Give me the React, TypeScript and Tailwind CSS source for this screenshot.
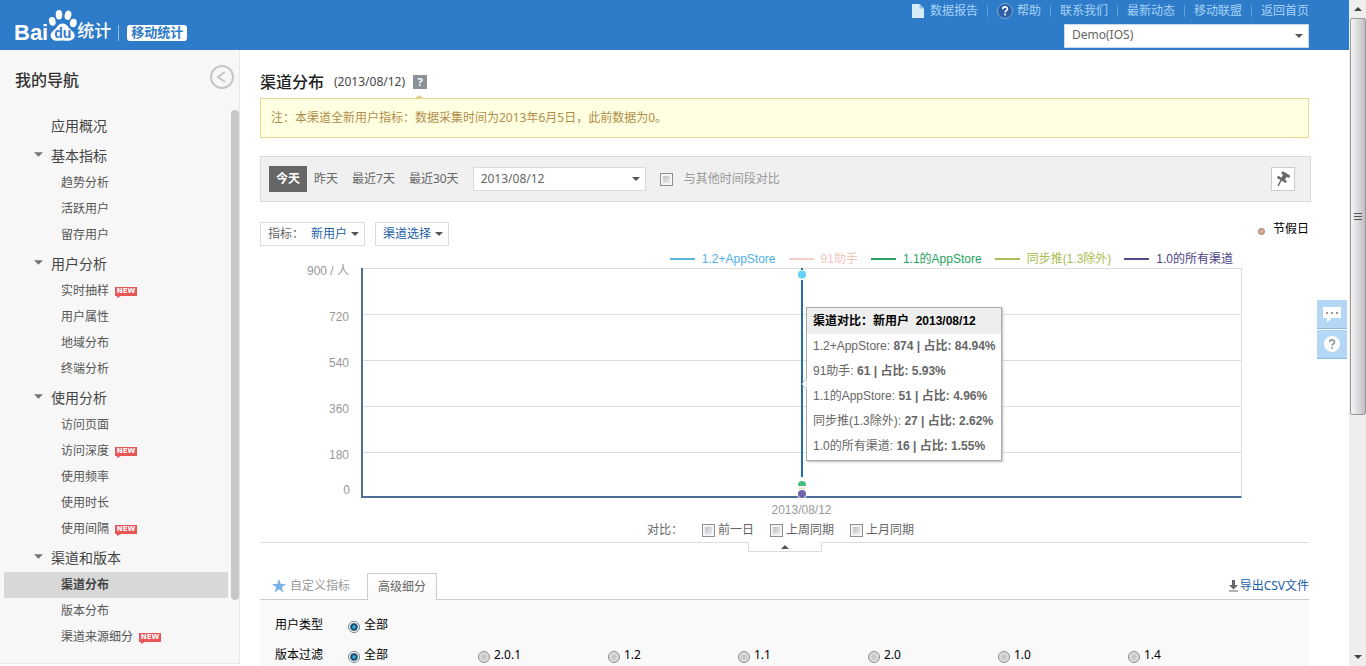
import React from "react";

type NavItem = { label: string; isNew?: boolean; active?: boolean };
type NavGroup = { title: string; items: NavItem[] };

const navGroups: NavGroup[] = [
  { title: "基本指标", items: [{ label: "趋势分析" }, { label: "活跃用户" }, { label: "留存用户" }] },
  {
    title: "用户分析",
    items: [{ label: "实时抽样", isNew: true }, { label: "用户属性" }, { label: "地域分布" }, { label: "终端分析" }],
  },
  {
    title: "使用分析",
    items: [
      { label: "访问页面" },
      { label: "访问深度", isNew: true },
      { label: "使用频率" },
      { label: "使用时长" },
      { label: "使用间隔", isNew: true },
    ],
  },
  {
    title: "渠道和版本",
    items: [{ label: "渠道分布", active: true }, { label: "版本分布" }, { label: "渠道来源细分", isNew: true }],
  },
];

const legend = [
  { name: "1.2+AppStore", line: "bg-[#5bb5e3]", text: "text-[#4fb0e6]" },
  { name: "91助手", line: "bg-[#f2cdc5]", text: "text-[#f2c6bd]" },
  { name: "1.1的AppStore", line: "bg-[#25a060]", text: "text-[#1f9f5c]" },
  { name: "同步推(1.3除外)", line: "bg-[#aebd5b]", text: "text-[#aabb50]" },
  { name: "1.0的所有渠道", line: "bg-[#534a8c]", text: "text-[#4b4285]" },
];

const shares = [
  { name: "1.2+AppStore", count: 874, share: "84.94%" },
  { name: "91助手", count: 61, share: "5.93%" },
  { name: "1.1的AppStore", count: 51, share: "4.96%" },
  { name: "同步推(1.3除外)", count: 27, share: "2.62%" },
  { name: "1.0的所有渠道", count: 16, share: "1.55%" },
];

const checkboxClass =
  "size-[13px] shrink-0 appearance-none border border-[#8e8f8f] bg-linear-to-br from-[#b4b9be] to-[#f4f4f4] shadow-[inset_0_0_0_2px_#f4f4f4] checked:bg-[#2d6fb5] checked:bg-none";
const radioClass =
  "size-3 shrink-0 appearance-none rounded-full border border-[#8a8a8a] bg-radial from-[#bdbdbd] to-[#f4f4f4] checked:border-[#6d7f8c] checked:from-[#3fb3e0] checked:from-10% checked:via-[#123a5c] checked:via-45% checked:to-[#ffffff] checked:to-62%";

function Caret({ className = "" }: { className?: string }) {
  return (
    <svg className={`h-1 w-2 shrink-0 ${className}`} viewBox="0 0 8 4" aria-hidden="true">
      <path d="M0 0h8L4 4z" fill="currentColor" />
    </svg>
  );
}

function NewBadge() {
  return (
    <span className="relative ml-1.5 flex h-[9px] w-[22px] items-center justify-center bg-[#e85658] font-['DejaVu_Sans',sans-serif] text-[7px] leading-none font-bold text-white">
      NEW
      <svg className="absolute top-full left-0.5 h-0.5 w-1" viewBox="0 0 4 2" aria-hidden="true">
        <path d="M0 0h4L0 2z" fill="#e85658" />
      </svg>
    </span>
  );
}

function Logo() {
  return (
    <a href="#home" className="flex items-end font-['Liberation_Sans','Noto_Sans_CJK_SC',sans-serif] text-white">
      <span className="text-[22px] leading-4 font-bold">Bai</span>
      <span className="relative block h-8 w-[29px]">
        <svg className="block h-8 w-[29px]" viewBox="0 0 29 32" aria-hidden="true">
          <g fill="#fff">
            <ellipse cx="4.3" cy="12.4" rx="3.3" ry="4.4" transform="rotate(-12 4.3 12.4)" />
            <ellipse cx="11" cy="5.8" rx="3.3" ry="4.8" />
            <ellipse cx="20" cy="6.2" rx="3.3" ry="4.7" transform="rotate(14 20 6.2)" />
            <ellipse cx="25.3" cy="14" rx="3.4" ry="4.2" transform="rotate(10 25.3 14)" />
            <path d="M14.5 14.6c-3.600 0-4.600 2.900-7.200 5.300-2.600 2.300-5 3.900-4.600 7 .4 3 2.900 4.900 6.700 4.900 2 0 3.200-.4 5.100-.4s3 .4 5.200.4c3.800 0 6.700-1.700 7-5 .2-3-2.300-4.600-4.700-6.900-2.600-2.400-3.500-5.300-7.500-5.300z" />
          </g>
        </svg>
        <span className="absolute inset-x-0 bottom-0.5 text-center text-sm leading-3 font-bold text-[#2e7bc9]">
          du
        </span>
      </span>
      <span className="text-[17px] leading-[18px] font-medium">统计</span>
    </a>
  );
}

function Header() {
  const links = ["联系我们", "最新动态", "移动联盟", "返回首页"];
  return (
    <header className="flex h-[50px] shrink-0 justify-between bg-[#2e7bc9] pr-10 pl-[14px]">
      <div className="flex items-end pb-[9px]">
        <Logo />
        <span className="ml-[7px] h-4 w-px bg-[#8fbde8]" />
        <span className="ml-2 h-4 rounded-[3px] bg-white px-1 text-[13px] leading-[14px] font-bold text-[#2e7bc9]">
          移动统计
        </span>
      </div>
      <div className="flex flex-col items-end">
        <nav className="flex h-[22px] items-center text-xs leading-4 text-[#a6d3f5]">
          <a href="#report" className="flex items-center gap-1.5">
            <svg className="h-3.5 w-3" viewBox="0 0 12 14" aria-hidden="true">
              <path d="M0 0h7.500L12 4.500V14H0z" fill="#d5ecf6" />
              <path d="M7.500 0v4.500H12z" fill="#8fc4e6" />
            </svg>
            数据报告
          </a>
          <span className="mx-[9px] h-3 w-px bg-[#5f9fdb]" />
          <a href="#help" className="flex items-center gap-1">
            <svg className="size-4" viewBox="0 0 16 16" aria-hidden="true">
              <circle cx="8" cy="8" r="7.500" fill="#2c5fa5" stroke="#7fa9d8" />
              <path
                d="M5.700 6.200c0-3 4.700-3 4.700-.3 0 1.600-2.300 1.700-2.300 3.500"
                fill="none"
                stroke="#fff"
                strokeWidth="1.600"
              />
              <rect x="7.200" y="10.600" width="1.800" height="1.800" fill="#fff" />
            </svg>
            帮助
          </a>
          {links.map((l) => (
            <React.Fragment key={l}>
              <span className="mx-[9px] h-3 w-px bg-[#5f9fdb]" />
              <a href="#nav">{l}</a>
            </React.Fragment>
          ))}
        </nav>
        <div className="relative mt-0.5 w-[245px]">
          <select
            aria-label="应用"
            className="block h-6 w-full appearance-none border border-[#c9dcef] bg-white pb-0.5 pl-[7px] text-xs text-[#666]"
          >
            <option>Demo(IOS)</option>
          </select>
          <Caret className="pointer-events-none absolute top-2.5 right-1.5 text-[#555]" />
        </div>
      </div>
    </header>
  );
}

function Sidebar() {
  return (
    <aside className="flex w-60 shrink-0 flex-col self-start border-r border-b border-[#e8e8e8] bg-[#f7f7f7] pb-3">
      <div className="flex h-[60px] items-center justify-between pr-[5px] pl-[15px]">
        <h2 className="text-base leading-5 font-medium text-[#333]">我的导航</h2>
        <button aria-label="收起导航" className="-mt-1.5">
          <svg className="size-6" viewBox="0 0 24 24" fill="none" stroke="#c6c6c6" strokeWidth="2" aria-hidden="true">
            <circle cx="12" cy="12" r="11" />
            <path d="M15 7l-7 5 7 5" />
          </svg>
        </button>
      </div>
      <div className="flex">
        <nav className="flex-1 pt-px pr-[3px] pl-1 text-xs text-[#555]">
          <a href="#overview" className="block pl-[47px] text-sm leading-[30px] text-[#444]">
            应用概况
          </a>
          {navGroups.map((g) => (
            <section key={g.title} className="pb-px">
              <h3 className="flex items-center gap-2 pl-[30px] text-sm leading-[29px] text-[#444]">
                <Caret className="-mt-0.5 h-[5px] w-[9px] text-[#757575]" />
                {g.title}
              </h3>
              <ul>
                {g.items.map((i) => (
                  <li key={i.label}>
                    <a
                      href="#item"
                      className={`flex h-[26px] items-center pl-[57px] leading-6 ${
                        i.active ? "bg-[#d8d8d8] font-bold text-[#444]" : ""
                      }`}
                    >
                      {i.label}
                      {i.isNew && <NewBadge />}
                    </a>
                  </li>
                ))}
              </ul>
            </section>
          ))}
        </nav>
        <div className="h-[490px] w-2 rounded-full bg-[#c8c8c8]" />
      </div>
    </aside>
  );
}

function PinIcon() {
  return (
    <svg className="h-4 w-3.5" viewBox="0 0 14 16" fill="none" stroke="currentColor" aria-hidden="true">
      <path d="M7 2l5.500 3.200" strokeWidth="3" strokeLinecap="round" />
      <path d="M9.600 3.500L7 8" strokeWidth="4.200" />
      <path d="M2.500 6.300l7 4.200" strokeWidth="2.600" strokeLinecap="round" />
      <path d="M5.200 9L2 15" strokeWidth="1.500" />
    </svg>
  );
}

function FilterBar() {
  return (
    <div className="-mr-0.5 mt-[18px] flex h-[46px] items-center border border-[#dcdcdc] bg-[#f0f0f0] pr-[15px] pl-2 text-xs text-[#666]">
      <button className="h-[26px] w-[38px] bg-[#666] font-bold text-white">今天</button>
      <button className="ml-[7px]">昨天</button>
      <button className="ml-[14px]">最近7天</button>
      <button className="ml-[14px]">最近30天</button>
      <div className="relative ml-[14px] w-[173px]">
        <select
          aria-label="日期"
          className="block h-6 w-full appearance-none border border-[#dcdcdc] bg-white pl-[7px] text-xs text-[#666]"
        >
          <option>2013/08/12</option>
        </select>
        <Caret className="pointer-events-none absolute top-2.5 right-1.5 text-[#555]" />
      </div>
      <label className="ml-[14px] flex items-center gap-[11px] text-[#999]">
        <input type="checkbox" className={checkboxClass} />
        与其他时间段对比
      </label>
      <button
        aria-label="固定"
        className="ml-auto flex size-6 items-center justify-center border border-[#ccc] bg-white text-[#666]"
      >
        <PinIcon />
      </button>
    </div>
  );
}

function Chart() {
  return (
    <div className="font-['Liberation_Sans','Noto_Sans_CJK_SC',sans-serif] text-xs">
      <div className="mt-1 flex h-[18px] items-center justify-end gap-[13px] pr-[76px] leading-4">
        {legend.map((l) => (
          <span key={l.name} className={`flex items-center gap-[7px] ${l.text}`}>
            <span className={`h-0.5 w-[25px] ${l.line}`} />
            {l.name}
          </span>
        ))}
      </div>
      <div className="flex pr-[67px]">
        <div className="flex h-[230px] w-[101px] flex-col pr-3 text-right leading-[6px] text-[#999]">
          {["900 / 人", "720", "540", "360", "180"].map((v) => (
            <span key={v} className="h-[46px] shrink-0">
              {v}
            </span>
          ))}
        </div>
        <div className="relative flex-1 border-r border-b-2 border-l-2 border-r-[#ddd] border-b-[#4d6f97] border-l-[#4d6f97]">
          <div className="absolute inset-0 flex flex-col">
            {[0, 1, 2, 3, 4].map((i) => (
              <div key={i} className="h-[46px] shrink-0 border-t border-[#ddd] last:h-11" />
            ))}
          </div>
          <span className="absolute right-full bottom-0 mr-[13px] leading-3 text-[#999]">0</span>
          <svg className="absolute top-0 left-1/2 -ml-[5px] h-[232px] w-2.5" viewBox="0 0 10 232" aria-hidden="true">
            <path d="M5 0v2M5 12v197" stroke="#1f70a8" strokeWidth="2" />
            <circle cx="5" cy="6.500" r="4" fill="#62d2f7" />
            <circle cx="5" cy="217" r="4" fill="#45bf80" />
            <path d="M0 218h10v4H0z" fill="#fff" />
            <path d="M2 220.500h6" stroke="#dfe3a8" strokeWidth="2" />
            <circle cx="5" cy="226" r="5" fill="#fff" />
            <circle cx="5" cy="226" r="4" fill="#6c65ad" />
          </svg>
          <div className="absolute top-[39px] left-1/2 ml-1 w-[196px] border border-[#aaa] bg-white text-[#666] shadow-[1px_1px_2px_#bbb]">
            <svg className="absolute top-[70px] right-full h-3 w-1.5" viewBox="0 0 6 12" aria-hidden="true">
              <path d="M6 0L1 6l5 6z" fill="#fff" stroke="#bbb" />
            </svg>
            <div className="h-[26px] bg-[#eee] px-1.5 leading-[26px] font-bold whitespace-pre text-black">
              渠道对比：新用户  2013/08/12
            </div>
            <ul className="h-[126px] px-1.5 leading-[25px] whitespace-nowrap">
              {shares.map((s) => (
                <li key={s.name}>
                  {s.name}:{" "}
                  <b>
                    {s.count} | 占比: {s.share}
                  </b>
                </li>
              ))}
            </ul>
          </div>
        </div>
      </div>
      <div className="mt-1 pr-[67px] pl-[101px] text-center leading-4 text-[#999]">2013/08/12</div>
    </div>
  );
}

function RadioRow({ name, label, options }: { name: string; label: string; options: string[] }) {
  return (
    <fieldset className="flex h-[30px] items-center pl-[15px] text-black">
      <legend className="float-left w-[73px]">{label}</legend>
      {options.map((o, i) => (
        <label key={o} className="flex w-[130px] items-center gap-1">
          <input type="radio" name={name} defaultChecked={i === 0} className={`mt-1 ${radioClass}`} />
          {o}
        </label>
      ))}
    </fieldset>
  );
}

function Main() {
  return (
    <main className="min-w-0 flex-1 pt-[22px] pr-10 pl-5 text-xs leading-4 text-[#666]">
      <div className="flex h-[26px] items-center pb-1.5">
        <h1 className="text-base leading-5 font-medium text-[#222]">渠道分布</h1>
        <span className="ml-2.5 text-[#444]">(2013/08/12)</span>
        <span className="relative ml-2 flex size-3.5 items-center justify-center bg-[#8a9197] text-[11px] font-bold text-white">
          ?
          <svg className="absolute top-5 left-px h-1 w-2.5" viewBox="0 0 10 4" aria-hidden="true">
            <path d="M5 0l5 4H0z" fill="#e3cf8c" />
          </svg>
        </span>
      </div>
      <p className="flex h-10 items-center border border-[#e5da8e] bg-[#ffffe1] px-2.5 text-[#b18d4a]">
        注：本渠道全新用户指标：数据采集时间为2013年6月5日，此前数据为0。
      </p>
      <FilterBar />
      <div className="mt-5 flex h-6 items-center gap-2.5">
        <button className="flex h-6 items-center border border-[#dcdcdc] pr-[5px] pl-[7px]">
          指标：
          <span className="ml-[7px] text-[#1a5ea8]">新用户</span>
          <Caret className="ml-1 text-[#555]" />
        </button>
        <button className="flex h-6 items-center border border-[#dcdcdc] pr-[5px] pl-[7px] text-[#1a5ea8]">
          渠道选择
          <Caret className="ml-1 text-[#555]" />
        </button>
        <span className="-mt-2.5 ml-auto flex items-center gap-2 text-black">
          <span className="mt-1 size-[7px] rounded-full border border-[#a07a74] bg-[#dba79b]" />
          节假日
        </span>
      </div>
      <Chart />
      <div className="flex h-6 items-center justify-center gap-4 pr-2">
        <span className="mr-[3px]">对比：</span>
        {["前一日", "上周同期", "上月同期"].map((t) => (
          <label key={t} className="flex items-center gap-[3px]">
            <input type="checkbox" className={checkboxClass} />
            {t}
          </label>
        ))}
      </div>
      <div className="flex h-2.5">
        <span className="flex-1 border-t border-[#ddd]" />
        <button
          aria-label="收起图表"
          className="flex w-[74px] items-center justify-center border-x border-b border-[#ddd] text-[#555]"
        >
          <Caret className="rotate-180" />
        </button>
        <span className="flex-1 border-t border-[#ddd]" />
      </div>
      <div className="mt-[21px] flex h-[27px] border-b border-[#ccc]">
        <button className="flex w-[107px] items-center gap-1 pl-3 text-[#999]">
          <svg className="size-3.5" viewBox="0 0 14 14" aria-hidden="true">
            <path d="M7 0l1.800 5H14L9.800 8.200 11.400 13.500 7 10.300 2.600 13.500 4.200 8.200 0 5h5.200z" fill="#79b2e6" />
          </svg>
          自定义指标
        </button>
        <button className="-mb-px w-[70px] border border-b-0 border-[#ccc] bg-linear-to-b from-white to-[#f9f9f9]">
          高级细分
        </button>
        <a href="#export" className="ml-auto flex items-center gap-0.5 text-[#1a5ea8]">
          <svg className="h-3 w-[9px]" viewBox="0 0 9 12" aria-hidden="true">
            <path d="M3 0h3v5h3L4.500 9.500 0 5h3zM0 10.500h9v1H0z" fill="#666" />
          </svg>
          导出CSV文件
        </a>
      </div>
      <div className="bg-[#f9f9f9] pt-2.5 pb-4">
        <RadioRow name="user-type" label="用户类型" options={["全部"]} />
        <RadioRow name="version" label="版本过滤" options={["全部", "2.0.1", "1.2", "1.1", "2.0", "1.0", "1.4"]} />
      </div>
    </main>
  );
}

function PageScrollbar() {
  return (
    <div className="flex w-[17px] shrink-0 flex-col items-center bg-[#eee] pl-px" aria-hidden="true">
      <div className="flex h-[18px] shrink-0 items-center">
        <Caret className="rotate-180 text-[#444]" />
      </div>
      <div className="flex w-full flex-1 flex-col">
        <div className="flex h-[63%] items-center justify-center rounded-[2px] border border-[#999] bg-linear-to-r from-[#f5f5f5] via-[#dcdce0] to-[#bcbcc2]">
          <svg className="size-2" viewBox="0 0 8 8">
            <path d="M1.500 0v8M4.500 0v8M7.500 0v8" stroke="#555" transform="rotate(90 4 4)" />
          </svg>
        </div>
      </div>
      <div className="flex h-[18px] shrink-0 items-center">
        <Caret className="text-[#444]" />
      </div>
    </div>
  );
}

function FloatingTools() {
  return (
    <div className="absolute top-[300px] right-0.5 flex flex-col gap-px">
      <button
        aria-label="反馈"
        className="flex h-[29px] w-[30px] items-center justify-center border-b border-[#8fb9dd] bg-[#b3d7f5]"
      >
        <svg className="h-[18px] w-[18px]" viewBox="0 0 18 18" aria-hidden="true">
          <path d="M0 2h18v11H9l-5 4.500V13H0z" fill="#fff" />
          <path d="M3 7h2v2H3zM8 7h2v2H8zM13 7h2v2h-2z" fill="#999" />
        </svg>
      </button>
      <button
        aria-label="疑问"
        className="flex h-[29px] w-[30px] items-center justify-center border-b border-[#8fb9dd] bg-[#b3d7f5]"
      >
        <svg className="size-4" viewBox="0 0 16 16" aria-hidden="true">
          <circle cx="8" cy="8" r="8" fill="#fff" />
          <path d="M5.600 6.300c0-3.200 4.900-3.200 4.900-.3 0 1.700-2.400 1.800-2.400 3.700" fill="none" stroke="#999" strokeWidth="1.700" />
          <rect x="7.200" y="11" width="1.800" height="1.800" fill="#999" />
        </svg>
      </button>
    </div>
  );
}

export default function App() {
  return (
    <div
      lang="zh-CN"
      className="flex h-screen overflow-hidden bg-white font-['Noto_Sans','Noto_Sans_CJK_SC',sans-serif]"
    >
      <div className="relative min-w-0 flex-1 overflow-hidden">
        <Header />
        <div className="flex">
          <Sidebar />
          <Main />
        </div>
        <FloatingTools />
      </div>
      <PageScrollbar />
    </div>
  );
}
